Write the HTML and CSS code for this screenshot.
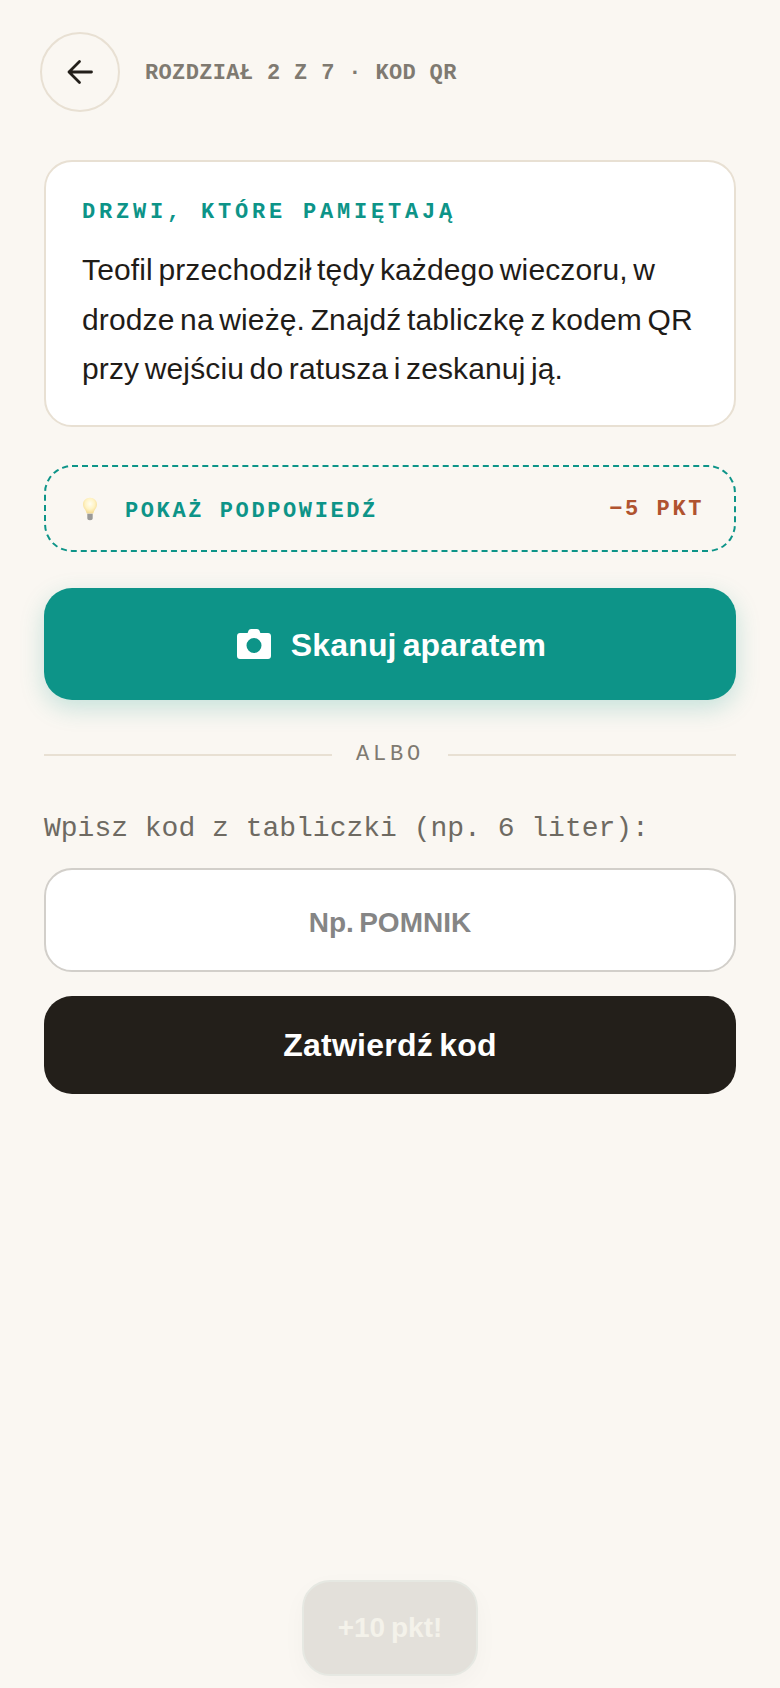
FILE: index.html
```html
<!DOCTYPE html>
<html lang="pl">
<head>
<meta charset="utf-8">
<title>Kod QR</title>
<link rel="stylesheet" href="styles.css">
</head>
<body>
<div class="page">
  <header class="top">
    <button class="back" aria-label="Wstecz">
      <svg class="back-icon" viewBox="0 0 28 28" width="28" height="28"><path d="M25.5 14H3M13.5 3.5L3 14l10.500 10.500" fill="none" stroke="#231f1a" stroke-width="2.800" stroke-linecap="round" stroke-linejoin="round"/></svg>
    </button>
    <span class="crumb">ROZDZIAŁ 2 Z 7 · KOD QR</span>
  </header>
  <main class="content">
    <section class="card">
      <h2 class="card-title">DRZWI, KTÓRE PAMIĘTAJĄ</h2>
      <p class="card-text">Teofil przechodził tędy każdego wieczoru, w drodze na wieżę. Znajdź tabliczkę z kodem QR przy wejściu do ratusza i zeskanuj ją.</p>
    </section>
    <button class="hint">
      <span class="hint-left">
        <svg class="bulb" viewBox="0 0 16 24" width="16" height="24">
          <defs><radialGradient id="glow" cx="50%" cy="38%" r="62%"><stop offset="0" stop-color="#fffef2"/><stop offset="0.55" stop-color="#fff3c4"/><stop offset="1" stop-color="#f3d88e"/></radialGradient></defs>
          <path d="M8 .8C3.800.8 1 3.800 1 7.400c0 3.600 3 5.400 3.700 9.200h6.600C12 12.800 15 11 15 7.400 15 3.800 12.200.8 8 .8z" fill="url(#glow)"/>
          <path d="M5.300 16.800h5.400v4.400c0 1-.9 2-2.700 2s-2.700-1-2.700-2z" fill="#9a9a98"/>
        </svg>
        <span class="hint-label">POKAŻ PODPOWIEDŹ</span>
      </span>
      <span class="hint-cost">−5 PKT</span>
    </button>
    <button class="scan">
      <svg class="camera" viewBox="0 0 34 30" width="34" height="30"><path fill-rule="evenodd" fill="#fff" d="M11.500 1.800C11.900.7 12.900 0 14 0h6c1.100 0 2.100.7 2.500 1.800L23.400 4H31c1.700 0 3 1.300 3 3v20c0 1.700-1.300 3-3 3H3c-1.700 0-3-1.300-3-3V7c0-1.700 1.300-3 3-3h7.600zM17 24a7.500 7.500 0 1 0 0-15 7.500 7.500 0 0 0 0 15z"/></svg>
      <span class="scan-label">Skanuj aparatem</span>
    </button>
    <div class="divider"><span class="rule"></span><span class="albo">ALBO</span><span class="rule"></span></div>
    <label class="code-label" for="code">Wpisz kod z tabliczki (np. 6 liter):</label>
    <input class="code-input" id="code" type="text" placeholder="Np. POMNIK">
    <button class="submit">Zatwierdź kod</button>
  </main>
  <div class="toast">+10 pkt!</div>
</div>
</body>
</html>
```
FILE: styles.css
```css
* { box-sizing: border-box; }
html, body { margin: 0; padding: 0; }
body { background: #faf7f2; color: #1f1c18; font-family: "Liberation Sans", Arial, sans-serif; }
button, input { font-family: inherit; }
.page { position: relative; width: 780px; height: 1688px; overflow: hidden; }
.top { display: flex; align-items: center; gap: 25px; padding: 32px 40px 0; }
.back { width: 80px; height: 80px; border-radius: 50%; border: 2px solid #e8e0d3; background: transparent; display: flex; align-items: center; justify-content: center; padding: 0; }
.crumb { padding-top: 2px; font-family: "Liberation Mono", monospace; font-weight: 700; font-size: 22px; letter-spacing: .35px; color: #7f7a71; }
.content { display: flex; flex-direction: column; padding: 48px 44px 0; }
.card { background: #fff; border: 2px solid #e8e0d3; border-radius: 28px; padding: 38px 36px 0; height: 267px; }
.card-title { margin: 0; font-family: "Liberation Mono", monospace; font-weight: 700; font-size: 22px; letter-spacing: 3.800px; line-height: 26px; color: #0d9488; }
.card-text { margin: 19px 0 0; font-size: 30px; line-height: 49.500px; letter-spacing: .13px; word-spacing: -2.900px; color: #1f1c18; }
.hint { margin-top: 38px; height: 87px; display: flex; align-items: center; justify-content: space-between; padding: 0 30px 0 36px; background: transparent; border: 2px dashed #0d9488; border-radius: 28px; }
.hint-left { display: flex; align-items: center; gap: 27px; }
.bulb { display: block; }
.hint-label { padding-top: 6px; font-family: "Liberation Mono", monospace; font-weight: 700; font-size: 22px; letter-spacing: 2.600px; color: #0d9488; }
.hint-cost { padding-top: 2px; font-family: "Liberation Mono", monospace; font-weight: 700; font-size: 22px; letter-spacing: 2.600px; color: #b0532f; }
.scan { margin-top: 36px; height: 112px; display: flex; align-items: center; justify-content: center; gap: 20px; padding: 0 0 0 3px; border: 0; border-radius: 28px; background: #0d9488; color: #fff; font-weight: 700; font-size: 32px; letter-spacing: .15px; word-spacing: -3px; box-shadow: 0 8px 24px rgba(13, 148, 136, .22); }
.scan-label { padding-top: 2px; }
.divider { margin-top: 38px; display: flex; align-items: center; gap: 24px; }
.rule { flex: 1; height: 2px; background: #e8e0d3; }
.albo { font-family: "Liberation Mono", monospace; font-size: 22px; letter-spacing: 3.800px; color: #7f7a71; line-height: 34px; }
.code-label { margin-top: 39px; font-family: "Liberation Mono", monospace; font-size: 28px; line-height: 36px; color: #6e6a62; }
.code-input { margin-top: 21px; height: 104px; width: 100%; border: 2px solid #d2cfca; border-radius: 28px; background: #fff; text-align: center; font-weight: 700; font-size: 28px; word-spacing: -2.500px; color: #1f1c18; padding: 6px 0 0; }
.code-input::placeholder { color: #858585; opacity: 1; }
.submit { margin-top: 24px; height: 98px; border: 0; border-radius: 28px; background: #231f1a; color: #fff; font-weight: 700; font-size: 32px; letter-spacing: .25px; word-spacing: -3px; }
.toast { position: absolute; left: 302px; top: 1580px; width: 176px; height: 96px; display: flex; align-items: center; justify-content: center; border-radius: 28px; background: #e3e0da; border: 2px solid #e6e8e2; color: #f4f2ea; font-weight: 700; font-size: 28px; word-spacing: -2px; box-shadow: 0 8px 24px rgba(0, 0, 0, .03); }
```
